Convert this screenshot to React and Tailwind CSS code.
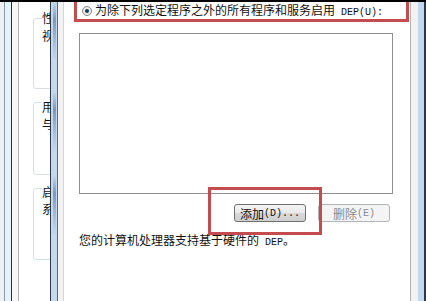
export default function App() {
  const cjk = { fontFamily: '"Noto Sans CJK SC", "Noto Sans", sans-serif' };
  const mono = { fontFamily: '"Liberation Mono", monospace' };
  return (
    <div className="w-[426px] h-[301px] overflow-hidden bg-white flex flex-col text-[12px] text-[#111]" style={cjk}>
      <div className="h-[2px] bg-black shrink-0" />
      <div className="flex flex-1 min-h-0">
        {/* left window frame */}
        <div className="w-[4px] bg-[#eef0f2]" />
        <div className="w-[1px] bg-[#8a99a8]" />
        <div className="w-[6px] bg-[#e2f4f8]" />
        <div className="w-[1px] bg-[#26323d]" />
        <div className="w-[6px] bg-[#f7f7f7]" />
        <div className="w-[1px] bg-[#b4b4b4]" />
        {/* behind panel with group boxes */}
        <div className="w-[31px] overflow-hidden bg-white">
          <div className="w-[60px] ml-[14px] flex flex-col">
            <div className="relative mt-[16px] h-[71px] border border-[#d6dfe5] rounded-[3px]">
              <span className="absolute -top-[8px] left-[8px] bg-white leading-[13px]">性能</span>
              <div className="pl-[8px] pt-[10px] leading-[13px]">视觉</div>
            </div>
            <div className="relative mt-[13px] h-[73px] border border-[#d6dfe5] rounded-[3px]">
              <span className="absolute -top-[3px] left-[8px] bg-white leading-[13px]">用户</span>
              <div className="pl-[8px] pt-[14px] leading-[13px]">与</div>
            </div>
            <div className="relative mt-[13px] h-[72px] border border-[#d6dfe5] rounded-[3px]">
              <span className="absolute -top-[4px] left-[8px] bg-white leading-[13px]">启动</span>
              <div className="pl-[8px] pt-[13px] leading-[13px]">系</div>
            </div>
          </div>
        </div>
        {/* blue splitter bar */}
        <div className="w-[1px] bg-[#2b3848]" />
        <div className="w-[6px] bg-[#c4d9ee] flex justify-center">
          <div className="w-[3px] h-full bg-[linear-gradient(to_bottom,#c4d9ee_0%,#7d98ba_6%,#a9c0dc_14%,#c4d9ee_20%,#c4d9ee_30%,#7d98ba_36%,#a9c0dc_44%,#c4d9ee_50%,#c4d9ee_58%,#7d98ba_64%,#a9c0dc_72%,#c4d9ee_78%,#c4d9ee_100%)]" />
        </div>
        <div className="w-[1px] bg-[#506a88]" />
        <div className="w-[5px] bg-[#f3f3f3]" />
        <div className="w-[1px] bg-[#d4d4d4]" />
        {/* main dialog content */}
        <div className="relative w-[346px] bg-white flex flex-col">
          <div className="ml-[10px] w-[335px] h-[20px] border-x-[3px] border-b-[3px] border-[#c44c4e] flex items-center">
            <div className="ml-[5px] w-[10px] h-[10px] rounded-full border border-[#8a8a8a] bg-[#eaeaea] flex items-center justify-center">
              <div className="w-[4px] h-[4px] rounded-full bg-[#1c3c5c]" />
            </div>
            <span className="ml-[3px] leading-[13px] whitespace-nowrap">
              为除下列选定程序之外的所有程序和服务启用<span style={mono} className="text-[10px]"> DEP(U):</span>
            </span>
          </div>
          <div className="mt-[11px] ml-[15px] w-[314px] h-[161px] border border-[#8e8f8f] bg-white" />
          <div className="mt-[10px] ml-[170px] flex gap-[12px]">
            <div className="w-[72px] h-[18px] rounded-[3px] border border-[#6f6f6f] bg-[linear-gradient(to_bottom,#f4f4f4_0%,#e9e9e9_50%,#d8d8d8_51%,#d0d0d0_100%)] flex items-center justify-center leading-[13px] whitespace-nowrap">
              添加<span style={mono} className="text-[10px]">(D)...</span>
            </div>
            <div className="w-[72px] h-[18px] rounded-[3px] border border-[#b0b4b8] bg-[#f4f4f4] flex items-center justify-center leading-[13px] text-[#8a8a8a] whitespace-nowrap">
              删除<span style={mono} className="text-[10px]">(E)</span>
            </div>
          </div>
          <div className="mt-[11px] ml-[15px] leading-[14px] whitespace-nowrap">
            您的计算机处理器支持基于硬件的<span style={mono} className="text-[10px]"> DEP</span>。
          </div>
          {/* annotation box */}
          <div className="absolute left-[144px] top-[185px] w-[114px] h-[48px] border-[3px] border-[#c44c4e]" />
        </div>
        {/* right window frame */}
        <div className="w-[1px] bg-[#b4b4b4]" />
        <div className="w-[7px] bg-[#f2f2f2]" />
        <div className="w-[6px] bg-[#c4d9ee]" />
        <div className="w-[2px] bg-[#2b3848]" />
      </div>
    </div>
  );
}
